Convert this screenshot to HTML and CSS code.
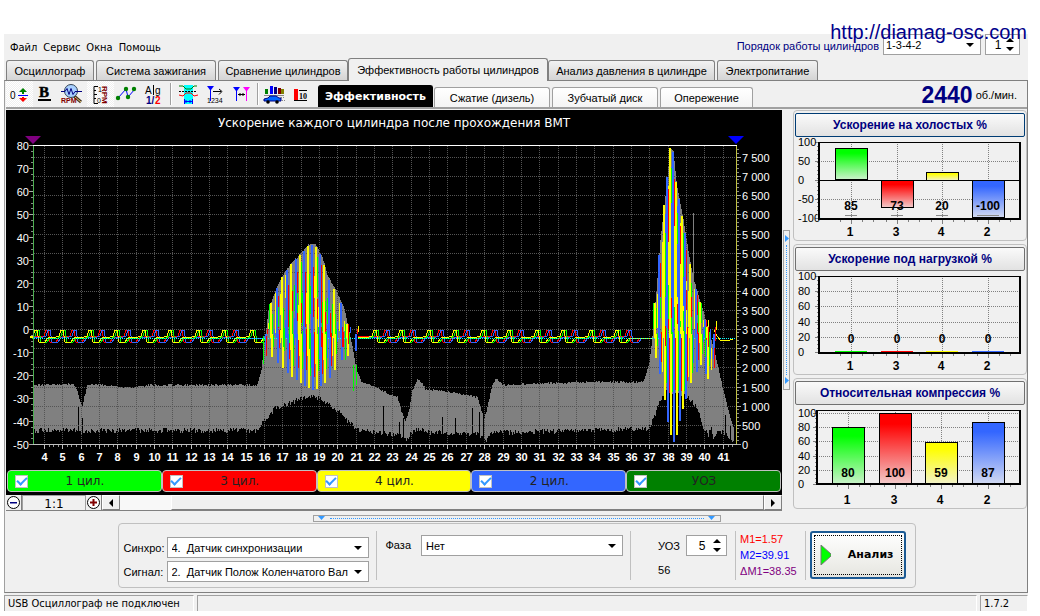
FILE: index.html
```html
<!DOCTYPE html>
<html lang="ru">
<head>
<meta charset="utf-8">
<title>USB Осциллограф</title>
<link rel="stylesheet" href="styles.css">
</head>
<body>
<div class="app">
  <a class="site" href="#">http://diamag-osc.com</a>
  <header class="head">
    <nav class="menu">
      <button>Файл</button><button>Сервис</button><button>Окна</button><button>Помощь</button>
    </nav>
    <div class="order">
      <label for="order">Порядок работы цилиндров</label>
      <span class="pick pick-order"><select id="order"><option>1-3-4-2</option></select></span>
      <span class="spin spin-small"><input id="first" type="text" value="1" aria-label="Первый цилиндр"><svg viewBox="0 0 8 13"><path d="M4 0L8 4H0zM4 13L0 9H8z"/></svg></span>
    </div>
  </header>

  <nav class="tabs">
    <button class="tab t1">Осциллограф</button>
    <button class="tab t2">Система зажигания</button>
    <button class="tab t3">Сравнение цилиндров</button>
    <button class="tab t4 active">Эффективность работы цилиндров</button>
    <button class="tab t5">Анализ давления в цилиндре</button>
    <button class="tab t6">Электропитание</button>
  </nav>

  <main class="panel">
    <div class="tools">
      <button class="tool on" aria-label="Смещение"><svg viewBox="0 0 27 25"><text x="4" y="17" font-size="10">0</text><path d="M12 13.500h10" stroke="#00f"/><path d="M16 12v-2h-3l4-4 4 4h-3v2z" fill="green"/><path d="M16 15v1h-3l4 4 4-4h-3v-1z" fill="red"/></svg></button>
      <button class="tool" aria-label="Толщина"><svg viewBox="0 0 27 25"><text class="serif" x="6" y="15" font-size="15" stroke="#000" stroke-width=".5">B</text><path d="M5 17h13v2H5z"/></svg></button>
      <button class="tool" aria-label="Обороты"><svg viewBox="0 0 27 25"><path d="M14 14l7 6" stroke="#432" stroke-width="3"/><path d="M15 15l6 5" stroke="#e6c56a"/><circle cx="11" cy="9" r="6.500" fill="#a8d0ff" stroke="#345"/><path d="M1 9.500h4l2-3 2 6 2-6 2 6 2-3h7" fill="none" stroke="navy"/><text x="1" y="21" font-size="7" fill="maroon" font-weight="bold">RPM</text></svg></button>
      <button class="tool on" aria-label="Шкала"><svg viewBox="0 0 27 25"><path d="M11 4.500H7V21.500h4M7 8.500h2M7 12.500h3M7 16.500h2" fill="none" stroke="#000" stroke-width="1"/><text x="11" y="10" font-size="7">1</text><text x="10" y="21" font-size="7">0</text><text x="0" y="0" font-size="8" font-weight="bold" fill="maroon" transform="translate(15 4) rotate(90)">RPM</text></svg></button>
      <button class="tool" aria-label="График"><svg viewBox="0 0 27 25"><path d="M4 16l8-9 2 8 7-8" fill="none" stroke="#00f"/><g fill="green"><circle cx="4" cy="16" r="2.200"/><circle cx="12" cy="7" r="2.200"/><circle cx="14" cy="15" r="2.200"/><circle cx="20" cy="7" r="2.200"/></g></svg></button>
      <button class="tool" aria-label="Алгоритм"><svg viewBox="0 0 27 25"><text x="4" y="12" font-size="10">A</text><path d="M12 3h1v10h-1z"/><text x="14" y="12" font-size="10">g</text><text x="5" y="22" font-size="10" fill="navy" font-weight="bold">1/</text><text x="14" y="22" font-size="10" fill="red" font-weight="bold">2</text></svg></button>
      <i class="bar"></i>
      <button class="tool" aria-label="Фазы"><svg viewBox="0 0 27 25"><path d="M10 3h9v19h-9z" fill="#0ff"/><path d="M5 4h4l3 3h5l3-3h3" fill="none" stroke="green"/><path d="M5 9.500h18" stroke="#000" stroke-dasharray="2 1"/><path d="M5 13l4 1 3-3h5l3 3 4-1" fill="none" stroke="red"/><path d="M10.500 17v5M18.500 17v5M11 19.500h7M12 18v3M16 18v3" stroke="#00f"/></svg></button>
      <button class="tool" aria-label="Порядок"><svg viewBox="0 0 27 25"><path d="M6 4h7l-3 4v11H9V8z" fill="#00f"/><path d="M12 9.500h8M18 7l3 2.500-3 3" fill="none" stroke="#000"/><text x="6" y="21" font-size="7">1234</text></svg></button>
      <button class="tool" aria-label="Маркеры"><svg viewBox="0 0 27 25"><path d="M5 5h7l-3 4v10H8V9z" fill="#00f"/><path d="M15 5h7l-3 4v10h-1V9z" fill="#f0f"/><path d="M10 12.500h7M12 11v3M15 11v3" stroke="#000"/></svg></button>
      <i class="bar"></i>
      <button class="tool" aria-label="Отчёт"><svg viewBox="0 0 27 25"><path d="M4 7h3v5H4z" fill="green"/><path d="M9 4h3v8H9z" fill="#00f"/><path d="M13 5h3v7h-3z" fill="navy"/><path d="M17 6h3v6h-3z" fill="maroon"/><path d="M20 7h3v5h-3z" fill="olive"/><path d="M3 13.500h20" stroke="#888"/><path d="M3 19v-2l4-1 2-2h6l3 2h2v3z" fill="#06f" stroke="navy"/><circle cx="7" cy="20" r="1.800"/><circle cx="16" cy="20" r="1.800"/><path d="M20 15.500h4M21 18.500h3" stroke="#888" stroke-dasharray="1 1"/></svg></button>
      <button class="tool" aria-label="Порог"><svg viewBox="0 0 27 25"><path d="M6 7h4v12H6z" fill="red"/><path d="M11 8.500h8M6 18.500h13" stroke="#000"/><text class="serif" x="11" y="17" font-size="8">10</text></svg></button>
      <div class="subtabs">
        <button class="subtab s1 active">Эффективность</button>
        <button class="subtab s2">Сжатие (дизель)</button>
        <button class="subtab s3">Зубчатый диск</button>
        <button class="subtab s4">Опережение</button>
      </div>
      <div class="rpm"><output>2440</output><span>об./мин.</span></div>
    </div>

    <div class="work">
      <section class="scope">
        <svg id="scope" viewBox="6 110 776 360"></svg>
        <div class="legend">
          <label class="green"><input type="checkbox" checked><span>1 цил.</span></label>
          <label class="red"><input type="checkbox" checked><span>3 цил.</span></label>
          <label class="yellow"><input type="checkbox" checked><span>4 цил.</span></label>
          <label class="blue"><input type="checkbox" checked><span>2 цил.</span></label>
          <label class="dark"><input type="checkbox" checked><span>УОЗ</span></label>
        </div>
        <div class="scroll">
          <button class="zoom" aria-label="Уменьшить"><svg viewBox="0 0 15 15"><circle cx="7.500" cy="7.500" r="6" fill="#fff" stroke="#000"/><path d="M4 7h7v1.500H4z" fill="navy"/></svg></button>
          <span class="ratio">1:1</span>
          <button class="zoom" aria-label="Увеличить"><svg viewBox="0 0 15 15"><circle cx="7.500" cy="7.500" r="6" fill="#fff" stroke="#000"/><path d="M4 6.500h7v2H4zM6.500 4h2v7h-2z" fill="maroon"/></svg></button>
          <button class="arrow" aria-label="Влево"><svg viewBox="0 0 8 8"><path d="M6 0v8L2 4z"/></svg></button>
          <span class="track"></span>
          <span class="thumb"></span>
          <button class="arrow" aria-label="Вправо"><svg viewBox="0 0 8 8"><path d="M2 0v8l4-4z"/></svg></button>
        </div>
      </section>
      <div class="vsplit"><svg viewBox="0 0 5 8"><path d="M1 0v7l4-3.500z"/></svg><i></i><svg viewBox="0 0 5 8"><path d="M1 0v7l4-3.500z"/></svg></div>
      <aside class="side">
        <section class="card"><button class="cardhead focus">Ускорение на холостых %</button><svg id="idle" viewBox="795 137 230 103"></svg></section>
        <section class="card"><button class="cardhead">Ускорение под нагрузкой %</button><svg id="load" viewBox="795 271 230 103"></svg></section>
        <section class="card"><button class="cardhead">Относительная компрессия %</button><svg id="comp" viewBox="795 405 230 103"></svg></section>
      </aside>
    </div>

    <div class="hsplit"><svg viewBox="0 0 8 5"><path d="M0 0h7L3.500 4z"/></svg><i></i><svg viewBox="0 0 8 5"><path d="M0 0h7L3.500 4z"/></svg></div>

    <form class="controls">
      <div class="sources">
        <label for="sync">Синхро:</label><span class="pick"><select id="sync"><option>4.&nbsp; Датчик синхронизации</option></select></span>
        <label for="signal">Сигнал:</label><span class="pick"><select id="signal"><option>2.&nbsp; Датчик Полож Коленчатого Вала</option></select></span>
      </div>
      <i class="rule"></i>
      <div class="phase"><label for="phase">Фаза</label><span class="pick"><select id="phase"><option>Нет</option></select></span></div>
      <i class="rule"></i>
      <div class="advance">
        <label for="uoz">УОЗ</label><span class="spin"><input id="uoz" type="text" value="5"><svg viewBox="0 0 8 13"><path d="M4 0L8 4H0zM4 13L0 9H8z"/></svg></span>
        <span>56</span>
      </div>
      <i class="rule"></i>
      <div class="marks"><span class="m1">M1=1.57</span><span class="m2">M2=39.91</span><span class="dm">ΔM1=38.35</span></div>
      <i class="rule"></i>
      <button type="button" class="run"><svg viewBox="0 0 11 20"><path d="M1 0l10 9v2L1 20z" fill="#0f0" stroke="#777" stroke-width="1"/></svg><span>Анализ</span></button>
    </form>
  </main>

  <footer class="status"><span class="st1">USB Осциллограф не подключен</span><span class="st2"></span><span class="st3">1.7.2</span></footer>
</div>
<script src="charts.js"></script>
</body>
</html>
```
FILE: styles.css
```css
* { box-sizing: border-box; }
body { margin: 0; background: #fff; color: #000; font: 11px/14px "Liberation Sans", Arial, sans-serif; }
button, input, select { font: inherit; color: inherit; margin: 0; padding: 0; }
button { border: 0; background: none; white-space: nowrap; }
label, span { white-space: nowrap; }
svg { display: block; }

.app { position: relative; margin: 34px 12px 4px 4px; background: #f0f0f0; }
.site { position: absolute; right: 1px; top: -14px; z-index: 2; font-size: 20px; line-height: 24px; color: #00008b; text-decoration: none; }

.head { display: flex; justify-content: space-between; height: 24px; padding: 0 8px 0 6px; }
.menu { display: flex; gap: 6px; align-items: center; padding-top: 3px; font-family: "DejaVu Sans Condensed", "DejaVu Sans", sans-serif; font-stretch: condensed; }
.order { display: flex; gap: 4px; align-items: flex-start; color: #000080; }
.order label { line-height: 24px; }
.pick { position: relative; display: block; width: 202px; height: 21px; background: #fff; border: 1px solid #a0a0a0; }
.pick select { width: 100%; height: 100%; border: 0; padding: 0 20px 0 4px; background: transparent; appearance: none; color: #000; }
.pick::after { content: ""; position: absolute; right: 6px; top: 8px; border: 4px solid transparent; border-top-color: #000; border-bottom: 0; pointer-events: none; }
.pick-order { width: 98px; }
.pick-order select { padding-left: 2px; }
.spin { display: flex; align-items: center; width: 41px; height: 21px; padding: 0 5px 0 4px; background: #fff; border: 1px solid #a0a0a0; color: #000; font-size: 12px; }
.spin input { flex: 1; min-width: 0; width: 0; border: 0; background: none; text-align: center; }
.spin svg { width: 8px; height: 13px; }
.spin-small { width: 35px; }

.tabs { display: flex; align-items: flex-end; gap: 2px; padding-left: 2px; height: 22px; }
.tab { height: 20px; border: 1px solid #808080; border-bottom: 0; border-radius: 3px 3px 0 0; background: linear-gradient(#f2f2f2, #d4d4d4); }
.t1 { width: 88px; } .t2 { width: 120px; } .t3 { width: 130px; } .t4 { width: 200px; } .t5 { width: 167px; } .t6 { width: 101px; }
.tab.active { height: 23px; margin: 0 -2px -1px; background: #f0f0f0; z-index: 1; }

.panel { border: 1px solid #808080; border-left-color: #a0a0a0; padding: 0 0 4px 1px; }
.tools { display: flex; height: 28px; border-bottom: 2px solid #a0a0a0; }
.tool { width: 27px; height: 26px; }
.tool.on { background: repeating-conic-gradient(#fff 0 25%, #f0f0f0 0 50%) 0 0 / 2px 2px; }
.tool svg { width: 27px; height: 25px; }
.serif { font-family: "Liberation Serif", serif; font-weight: bold; }
.bar { width: 2px; margin: 2px 2px; background: #a0a0a0; border-right: 1px solid #fff; }
.subtabs { display: flex; align-items: flex-end; gap: 2px; padding-left: 3px; }
.subtab { height: 20px; border: 1px solid #a0a0a0; border-bottom: 0; border-radius: 3px 3px 0 0; background: linear-gradient(#fff, #f4f4f4); }
.s1 { width: 115px; } .s2 { width: 116px; } .s3 { width: 106px; } .s4 { width: 93px; }
.subtab.active { height: 22px; margin-right: -1px; border-color: #000; background: #000; color: #fff; font: bold 11px/14px "DejaVu Sans", Verdana, sans-serif; }
.rpm { display: flex; align-items: center; gap: 3px; margin-left: auto; padding: 2px 10px 0 0; }
.rpm output { font-size: 23px; font-weight: bold; color: #000080; }

.work { display: flex; padding-top: 1px; }
.scope { flex: 776; min-width: 0; background: #000; }
.scope > svg { width: 100%; }
.legend { display: grid; grid-template-columns: repeat(5, 1fr); padding: 0 1px 3px; }
.legend label { display: flex; align-items: center; height: 22px; padding: 0 7px; border: 1px solid #c0c0c0; border-radius: 4px; font: 12px/16px "DejaVu Sans", Verdana, sans-serif; color: #222; }
.legend span { flex: 1; text-align: center; padding-right: 12px; }
.legend input { appearance: none; width: 13px; height: 13px; background: #fff; border: 1px solid #c0c0c0; display: grid; place-items: center; }
.legend input:checked::after { content: ""; width: 8px; height: 4px; border: solid #3399ff; border-width: 0 0 2px 2px; transform: translateY(-1px) rotate(-45deg); }
.green { background: #0f0; } .red { background: #f00; } .yellow { background: #ff0; } .blue { background: #36f; } .dark { background: #008000; }
.scroll { display: flex; height: 16px; background: #f0f0f0; border-bottom: 1px solid #808080; }
.zoom { width: 16px; border-right: 1px solid #808080; }
.zoom svg { width: 15px; height: 15px; }
.ratio { width: 64px; border: 1px solid #a0a0a0; border-width: 1px 1px 0; text-align: center; font: 12px/17px "DejaVu Sans", Verdana, sans-serif; overflow: hidden; }
.arrow { width: 18px; border: 1px solid #808080; border-left-color: #fff; border-top-color: #fff; display: grid; place-items: center; }
.arrow svg { width: 8px; height: 8px; }
.track { width: 51px; background: #f8f8f8; }
.thumb { flex: 1; border: 1px solid #808080; border-top-color: #fff; border-left-color: #fff; }

.vsplit { display: flex; flex-direction: column; width: 7px; height: 160px; margin: 120px 3px 0 1px; border: 1px solid #a0a0a0; padding: 4px 0; }
.vsplit svg { width: 5px; height: 8px; fill: #3399ff; }
.vsplit i { flex: 1; width: 0; margin: 2px auto; border-left: 1px dotted #3399ff; }
.side { flex: 234; min-width: 0; display: flex; flex-direction: column; gap: 3px; }
.card { border: 1px solid #c0c0c0; border-radius: 4px; padding: 2px 1px 0; }
.card > svg { width: 100%; }
.cardhead { display: block; width: 100%; height: 24px; border: 1px solid #707070; border-radius: 2px; background: linear-gradient(#fafafa, #e2e2e2); color: #000080; font-size: 12px; font-weight: bold; }
.cardhead.focus { border-color: #003c74; }

.hsplit { display: flex; align-items: center; width: 408px; height: 7px; margin: 4px auto 1px; border: 1px solid #a0a0a0; padding: 0 4px; }
.hsplit svg { width: 8px; height: 5px; fill: #3399ff; }
.hsplit i { flex: 1; margin: 0 4px; border-top: 1px dotted #3399ff; }

.controls { display: flex; width: 798px; height: 65px; margin: 0 auto; border: 1px solid #c0c0c0; border-radius: 4px; padding: 7px 9px 5px 5px; }
.rule { width: 1px; margin-bottom: 2px; background: #c0c0c0; }
.sources { display: grid; grid-template-columns: 39px 202px; column-gap: 4px; row-gap: 3px; align-content: center; align-items: center; margin: 6px 7px 0 0; }
.phase { display: flex; gap: 10px; margin: 4px 7px 0 9px; }
.phase label { line-height: 21px; }
.advance { display: grid; grid-template-columns: 24px 41px; column-gap: 4px; grid-template-rows: 21px 28px; align-items: center; margin: 4px 8px 0 27px; }
.marks { display: flex; flex-direction: column; width: 65px; margin-left: 4px; line-height: 16px; }
.m1 { color: #f00; } .m2 { color: #00f; } .dm { color: #800080; }
.run { display: flex; align-items: center; gap: 17px; width: 96px; height: 48px; margin-left: 4px; padding-left: 8px; border: 2px solid #1c5a94; border-radius: 3px; background: linear-gradient(#fff, #e6e6e0); outline: 1px dotted #000; outline-offset: -5px; font: bold 11px/14px "DejaVu Sans", Verdana, sans-serif; }
.run svg { width: 11px; height: 20px; }

.status { display: flex; gap: 3px; height: 18px; padding-top: 2px; font: 11px/15px "DejaVu Sans Condensed", "DejaVu Sans", sans-serif; font-stretch: condensed; }
.status span { border: 1px solid #a0a0a0; border-width: 1px 0 0 1px; padding-left: 3px; border-right: 1px solid #fff; }
.st1 { width: 190px; } .st2 { flex: 1; } .st3 { width: 48px; }
```
FILE: charts.js
```js
const esc = (a) => Object.entries(a).map(([k, v]) => `${k}="${v}"`).join(" ");
const el = (n, a, t = "") => `<${n} ${esc(a)}>${t}</${n}>`;
const line = (x1, y1, x2, y2, s, extra = {}) => el("path", { d: `M${x1} ${y1}L${x2} ${y2}`, stroke: s, fill: "none", "shape-rendering": "crispEdges", ...extra });
const rect = (x, y, w, h, f, extra = {}) => el("rect", { x, y, width: w, height: Math.max(0, h), fill: f, "shape-rendering": "crispEdges", ...extra });
const text = (x, y, t, a = {}) => el("text", { x, y, "font-size": 12, ...a }, t);

let seed = 7;
const rnd = () => { seed = (seed * 1103515245 + 12345) % 2147483648; return seed / 2147483648; };
const at = (pts, x) => {
  for (let i = 1; i < pts.length; i++) {
    const [ax, ay] = pts[i - 1], [bx, by] = pts[i];
    if (x <= bx) return ay + (by - ay) * (x - ax) / (bx - ax);
  }
  return pts[pts.length - 1][1];
};

const top_ = [[34,384],[72,383],[76,387],[80,401],[82,405],[84,396],[87,385],[92,383],[130,387],[150,384],[257,384],[261,368],[263,350],[268,310],[272,298],[280,278],[290,263],[300,253],[308,244],[315,243],[322,256],[328,276],[336,290],[344,308],[350,335],[356,368],[361,381],[375,386],[385,391],[397,396],[401,410],[405,421],[409,408],[412,390],[417,378],[421,381],[425,388],[440,390],[460,393],[477,396],[481,410],[484,418],[488,402],[492,384],[496,377],[502,384],[550,382],[600,381],[643,381],[649,362],[652,335],[656,290],[660,240],[666,185],[670,146],[673,150],[676,180],[684,225],[690,262],[694,280],[700,300],[708,328],[714,350],[722,385],[728,410],[734,430]];
const bot_ = [[34,429],[78,429],[82,434],[86,429],[257,429],[263,420],[275,407],[290,401],[305,396],[315,395],[325,400],[340,412],[352,424],[357,429],[385,432],[398,433],[406,439],[412,430],[420,427],[430,431],[478,432],[486,439],[490,431],[540,430],[648,427],[655,412],[660,398],[666,390],[688,396],[698,408],[703,426],[708,434],[711,424],[713,438],[717,428],[728,434],[734,441]];

function scope() {
  let s = rect(6, 110, 776, 360, "#000");
  s += text(394, 127, "Ускорение каждого цилиндра после прохождения ВМТ", { fill: "#fff", "text-anchor": "middle", "font-family": "DejaVu Sans, sans-serif" });
  for (let x = 34; x < 734; x++) {
    const a = at(top_, x) + rnd() * 2, b = at(bot_, x) + rnd() * 5 - 1;
    s += rect(x, a, 1, b - a, "#808080");
  }
  [[78,407],[82,418],[383,406],[399,422],[403,418],[442,417],[455,418],[472,408],[479,412],[483,416],[725,415],[730,425]].forEach(([x, y]) => { s += rect(x, y, 1, 442 - y, "#000"); });
  s += rect(693, 213, 1, 80, "#808080");
  for (let k = 4; k <= 41; k++) {
    const x = Math.round(44 + (k - 4) * 18.34) + .5;
    s += line(x, 146, x, 444, "#555", { "stroke-dasharray": "1 1" });
    s += line(x, 445, x, 449, "#c0c0c0");
    s += text(x, 461, k, { fill: "#fff", "font-weight": "bold", "font-size": 11, "text-anchor": "middle" });
    for (let j = 1; j < 4; j++) if (x + j * 4.6 < 736) s += line(x + j * 4.6, 445, x + j * 4.6, 447, "#999");
  }
  for (let v = 0; v <= 7500; v += 500) {
    const y = Math.round(444 - v / 500 * 19.13) + .5;
    if (v) s += line(34, y, 736, y, "#555", { "stroke-dasharray": "1 1" });
    s += line(737, y, 741, y, "#aaa");
    s += text(742, y + 4, v >= 1000 ? `${v / 1000 | 0} ${String(v % 1000).padStart(3, "0")}` : v, { fill: "#fff", "font-size": 11 });
    for (let j = 1; j < 5; j++) if (y - j * 4 > 146) s += line(737, y - j * 4, 739, y - j * 4, "#888");
  }
  for (let v = -50; v <= 80; v += 10) {
    const y = Math.round(329 - v * 2.3) + .5;
    s += line(29, y, 33, y, "#aaa");
    s += text(29, y + 4, v, { fill: "#fff", "text-anchor": "end", "font-size": 11 });
    if (v < 80) for (let j = 1; j < 4; j++) s += line(31, y - j * 5.7, 33, y - j * 5.7, "#888");
  }

  const wave = (start, a, b, c, dx) => {
    let d = `M${a} ${338 + dx}`;
    for (let p = start, i = 0; p < b; p += i++ % 2 ? 28 : 26) {
      if (p < a + 1 || p > b - 8) continue;
      d += `L${p - 6 + dx} ${337 + dx}L${p - 3 + dx} 336L${p - 1 + dx} 330L${p + 1 + dx} 330L${p + 3 + dx} 342L${p + 9 + dx} 342L${p + 12 + dx} 338`;
    }
    return el("path", { d: d + `L${b} ${338}`, fill: "none", stroke: c, "shape-rendering": "crispEdges" });
  };
  [[34, 264, 36], [358, 652, 375]].forEach(([a, b, p]) => {
    s += wave(p + 12, a, b, "#f00", -1) + wave(p + 13, a, b, "#36f", 0);
    s += wave(p + 1, a, b, "#0f0", 1) + wave(p, a, b, "#ff0", 0);
  });
  s += line(34, 338.5, 736, 338.5, "#00ffff", { "stroke-dasharray": "1 1" });
  s += el("path", { d: "M714 330l3 6 3 4h10l3-1", stroke: "#ff0", fill: "none", "shape-rendering": "crispEdges" });

  const burst = (ys, bs, low) => {
    const pair = (x, main, side, w) => {
      const t = at(top_, x + 1) + 2, b = at(low, x);
      s += rect(x, t, w, 338 - t, main);
      if (t < 300) s += rect(x + w, t + 6 + rnd() * 30, 1, 28 + rnd() * 30, side);
      s += rect(x + 1, 334, 2, b - 334, main) + rect(x + 3, 326 + rnd() * 10, 1, Math.min(b - 345, 60), side);
      s += rect(x - 1, Math.max(t, 275 + rnd() * 35), 1, 20 + rnd() * 20, rnd() > .5 ? "#0f0" : "#ff0");
      s += rect(x + 4, 318 + rnd() * 12, 1, Math.max(6, b - 350), main === "#36f" ? "#ff0" : "#36f");
      s += rect(x + 2, Math.max(t, 290 + rnd() * 40), 1, 20, rnd() > .5 ? "#f00" : "#0f0");
    };
    bs.forEach((x) => pair(x, "#36f", "#f00", 2));
    ys.forEach((x) => pair(x, "#ff0", "#0f0", 2));
  };
  burst([270,281,290,299,307,315,323,333,346], [264,276,286,295,303,311,319,328,340,354], [[264,350],[275,362],[290,377],[303,386],[312,391],[325,382],[340,360],[355,350]]);
  for (let x = 662; x < 688; x += 3) s += rect(x, at(top_, x) + 20, 1, 130, x % 2 ? "#36f" : "#ff0");
  burst([654,663,669,675,681,689,699,706], [658,666,672,678,684,695,704,712], [[652,350],[657,370],[662,392],[667,430],[673,444],[680,412],[690,380],[700,363],[707,382],[715,345]]);

  s += line(33, 145.5, 737, 145.5, "#fff") + line(33, 444.5, 737, 444.5, "#c0c0c0");
  s += line(33.5, 146, 33.5, 444, "#4caf50") + line(736.5, 146, 736.5, 444, "#c0c040");
  s += el("path", { d: "M25 136h16l-8 8z", fill: "#800080" }) + el("path", { d: "M728 136h16l-8 8z", fill: "#00f" });
  document.getElementById("scope").innerHTML = s;
}

function bars(id, c) {
  const [x0, y0, x1, y1] = c.box;
  const cols = ["#00ff00", "#ff0000", "#ffff00", "#3366ff"];
  let s = `<defs>` + cols.map((k, i) => `<linearGradient id="${id}g${i}" x1="0" x2="0" y1="0" y2="1"><stop offset=".15" stop-color="${k}"/><stop offset="1" stop-color="${k}" stop-opacity=".15"/></linearGradient>`).join("") + `</defs>`;
  c.ticks.forEach(([t, y]) => {
    s += line(x0 - 4, y + .5, x0, y + .5, "#808080") + line(x0, y + .5, x1, y + .5, "#808080", { "stroke-dasharray": "1 1" });
    s += text(798, y + 4, t, { "font-size": 11 });
  });
  for (let y = y0 + 4; y < y1; y += 4) s += line(x0 - 2, y, x0, y, "#808080");
  c.bars.forEach(([x, y, h, v], i) => {
    const m = x + 16;
    s += line(m + .5, y0, m + .5, y1, "#808080", { "stroke-dasharray": "1 1" });
    if (h) s += rect(x, y, 33, h, "#f0f0f0") + rect(x + .5, y + .5, 32, h, `url(#${id}g${i})`, { stroke: "#000" });
    else s += rect(x, y1 - 2, 32, 1, cols[i]);
    if (c.under) s += rect(m - (v < 0 ? 11 : 6), 215, v < 0 ? 22 : 12, 1, "#888");
    s += text(m, c.vy, v, { "font-weight": "bold", "text-anchor": "middle" });
    s += text(m - 1, c.ly, [1, 3, 4, 2][i], { "font-weight": "bold", "text-anchor": "middle" });
    for (let j = -1; j < 3; j++) s += line(m + j * 11 + .5, y1 + 1, m + j * 11 + .5, y1 + (j ? 3 : 5), "#808080");
  });
  if (c.under) s += line(x0, 180.5, x1, 180.5, "#000");
  s += rect(x0, y0, x1 - x0, 1, "#000") + rect(x0 - 1, y0, 2, y1 - y0, "#000") + rect(x1 - 1, y0, 2, y1 - y0, "#000") + rect(x0 - 1, y1 - 1, x1 - x0 + 2, 2, "#000");
  document.getElementById(id).innerHTML = s;
}

scope();
bars("idle", { box: [819, 142, 1020, 219], under: true, vy: 210, ly: 236, ticks: [[100,142],[50,161],[0,180],[-50,199],[-100,218]], bars: [[835,148,31,85],[881,180,27,73],[926,172,8,20],[972,180,37,-100]] });
bars("load", { box: [819, 276, 1020, 353], vy: 343, ly: 370, ticks: [[100,276],[80,291],[60,306],[40,322],[20,337],[0,352]], bars: [[835,352,0,0],[881,352,0,0],[926,352,0,0],[972,352,0,0]] });
bars("comp", { box: [817, 410, 1020, 484], vy: 477, ly: 504, ticks: [[100,413],[80,427],[60,441],[40,456],[20,470],[0,484]], bars: [[832,427,57,80],[879,413,71,100],[925,442,42,59],[972,422,62,87]] });
```
